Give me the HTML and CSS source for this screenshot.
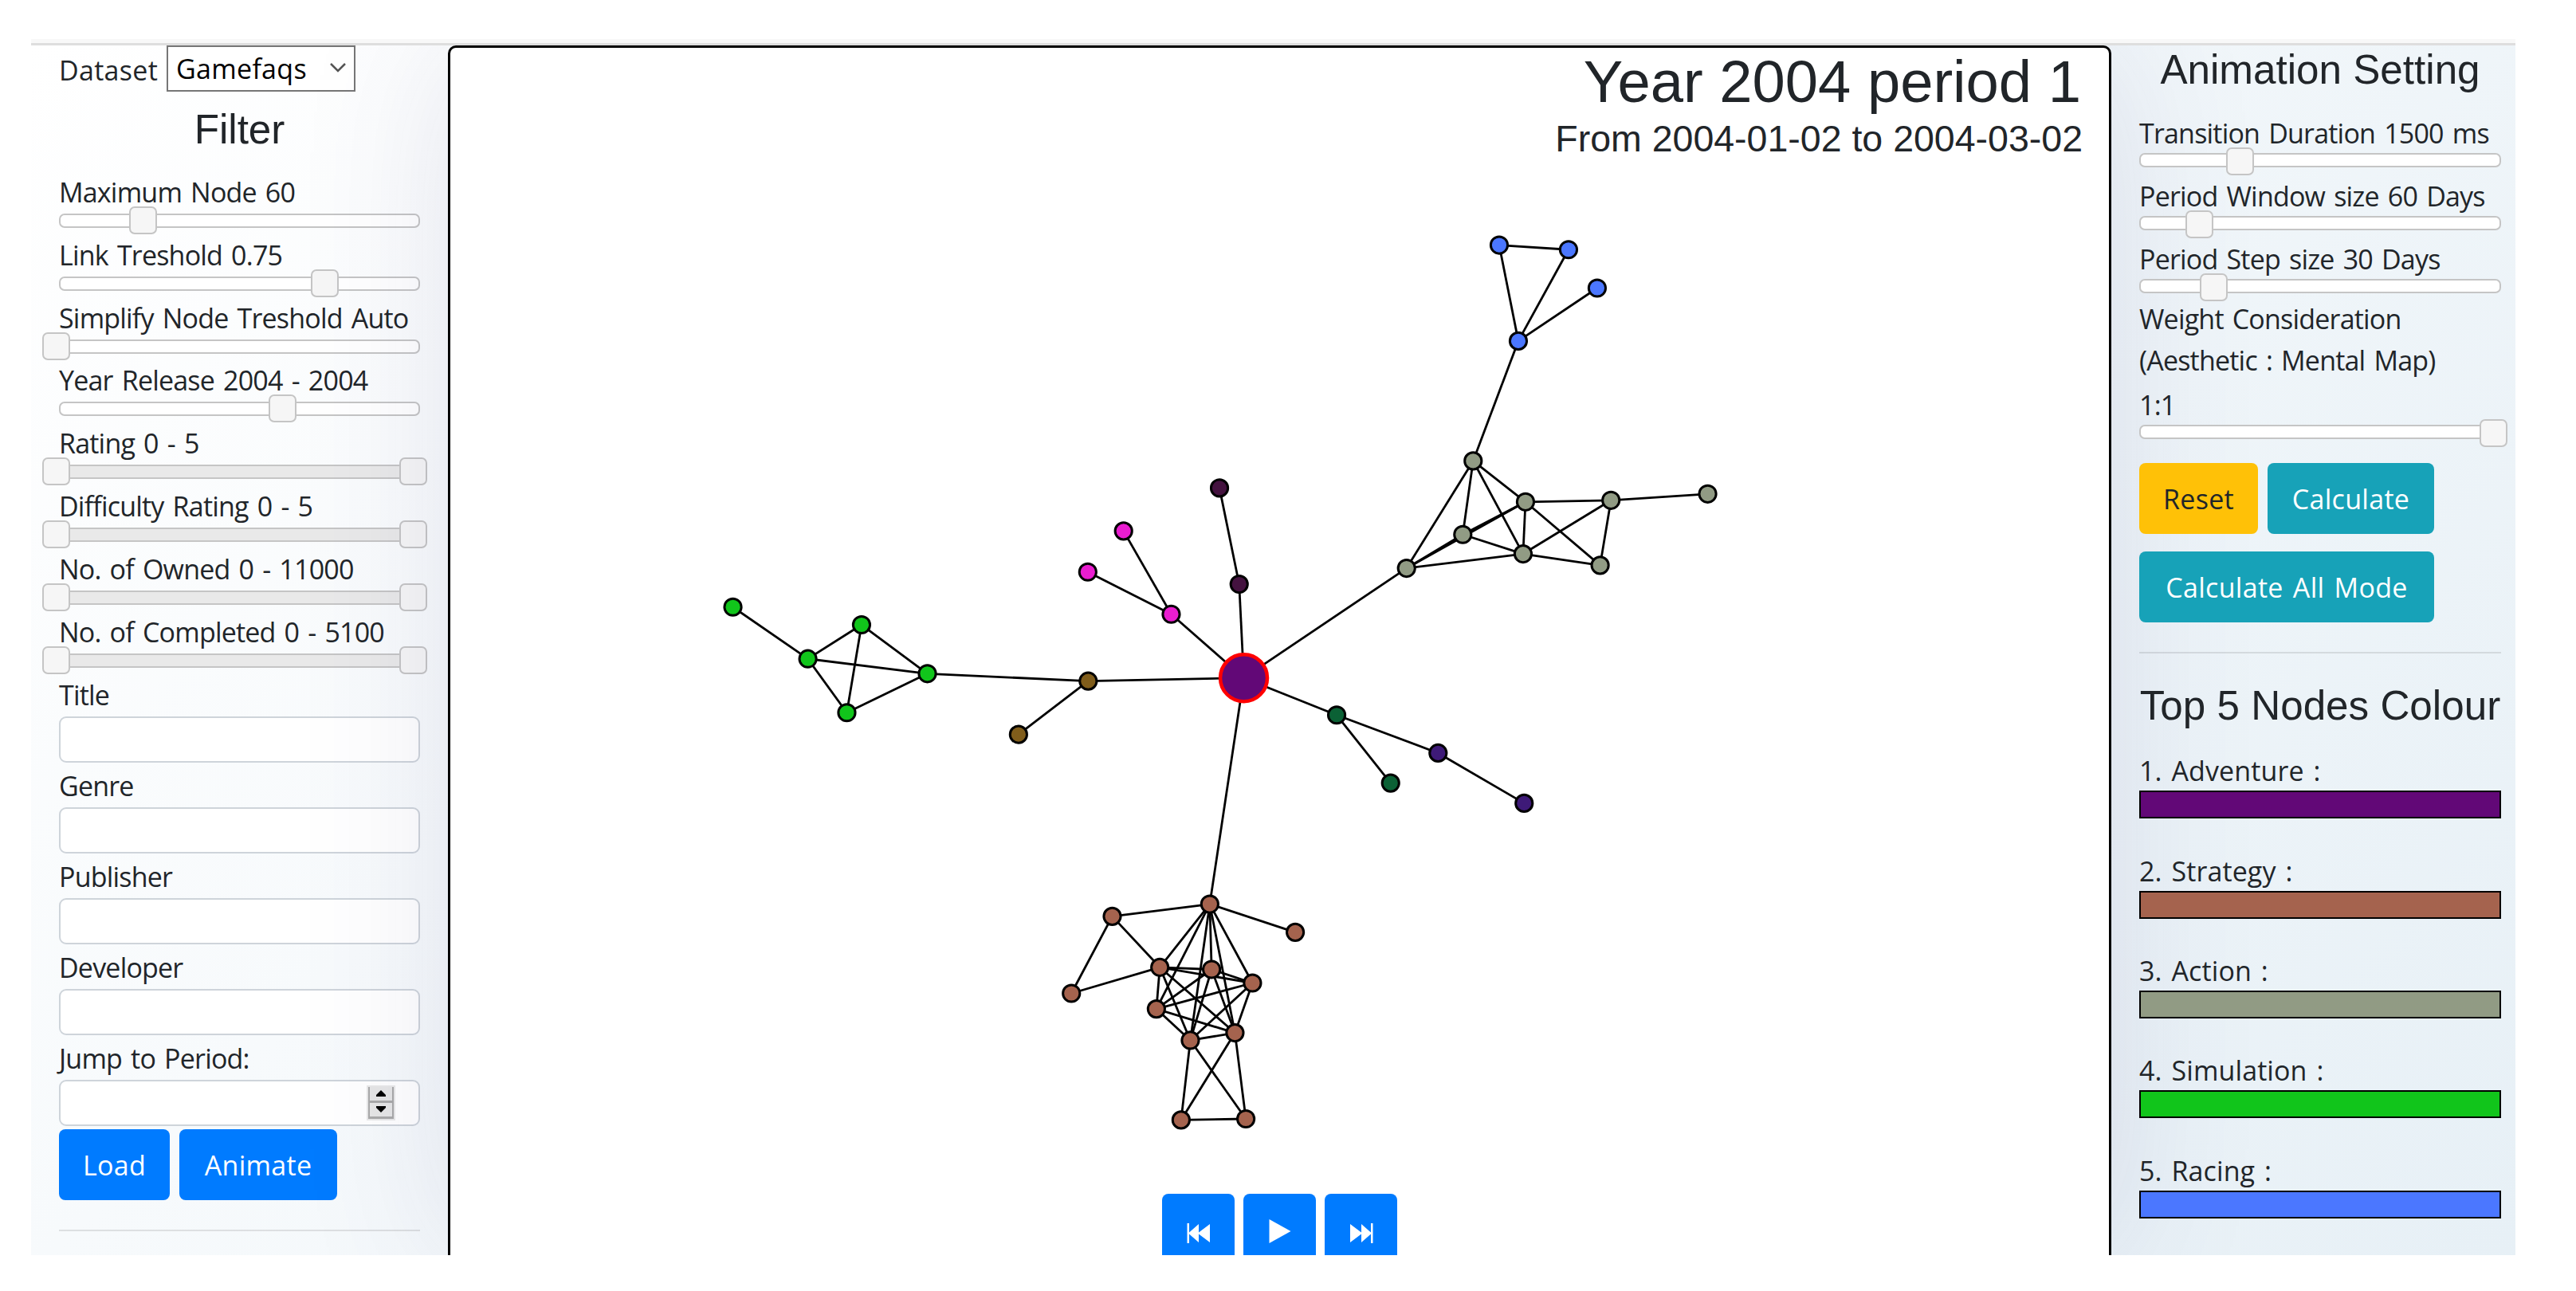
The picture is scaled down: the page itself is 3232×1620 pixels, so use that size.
FILE: index.html
```html
<!DOCTYPE html>
<html lang="en">

<head>
    <meta charset="UTF-8">
    <title>Dynamic Graph - Gamefaqs</title>
    <link rel="stylesheet" href="styles.css">
</head>

<body>
    <div class="page">
        <div class="navbar"></div>
        <div class="main">
            <div class="sidebar left">
                <div class="dataset">
                    <label>Dataset</label>
                    <div class="select">
                        <span>Gamefaqs</span>
                        <svg class="chevron" viewBox="0 0 20 12"><path d="M1 1 L10 10 L19 1" /></svg>
                    </div>
                </div>
                <h4 class="filter-title">Filter</h4>
                <div id="filters"></div>
                <div class="field"><label>Title</label><div class="text-box"></div></div>
                <div class="field"><label>Genre</label><div class="text-box"></div></div>
                <div class="field"><label>Publisher</label><div class="text-box"></div></div>
                <div class="field"><label>Developer</label><div class="text-box"></div></div>
                <div class="field">
                    <label>Jump to Period:</label>
                    <div class="text-box number">
                        <div class="spinner">
                            <span><svg viewBox="0 0 12 8"><path d="M6 0 L12 6 V8 H0 V6 Z" /></svg></span>
                            <span><svg viewBox="0 0 12 8"><path d="M0 0 H12 V2 L6 8 L0 2 Z" /></svg></span>
                        </div>
                    </div>
                </div>
                <div class="buttons">
                    <button class="btn primary load">Load</button>
                    <button class="btn primary animate">Animate</button>
                </div>
                <hr>
            </div>

            <div class="graph">
                <svg id="network" viewBox="564.4 60 2082 1515"></svg>
                <h1>Year 2004 period 1</h1>
                <h3>From 2004-01-02 to 2004-03-02</h3>
                <div class="controls">
                    <button class="btn primary">
                        <svg viewBox="0 0 30 30"><path d="M0.5 4 H3 V15.5 L15 5 V15.5 L29 5 V28 L15 17.5 V28 L3 17.5 V29 H0.5 Z" /></svg>
                    </button>
                    <button class="btn primary">
                        <svg viewBox="0 0 30 30"><path d="M1.5 -1 L28.5 14 L1.5 29 Z" /></svg>
                    </button>
                    <button class="btn primary">
                        <svg viewBox="0 0 30 30"><path d="M29.5 4 H27 V15.5 L15 5 V15.5 L1 5 V28 L15 17.5 V28 L27 17.5 V29 H29.5 Z" /></svg>
                    </button>
                </div>
            </div>

            <div class="sidebar right">
                <h4>Animation Setting</h4>
                <div id="settings"></div>
                <div class="weight">
                    <p>Weight Consideration<br>(Aesthetic : Mental Map)</p>
                    <div id="weight"></div>
                </div>
                <div class="buttons">
                    <button class="btn warning">Reset</button>
                    <button class="btn info">Calculate</button>
                    <button class="btn info all-mode">Calculate All Mode</button>
                </div>
                <hr>
                <h4>Top 5 Nodes Colour</h4>
                <div class="legend" id="legend"></div>
            </div>
        </div>
    </div>

    <script>
        // label, handle offsets from the start of the track
        const filters = [
            ['Maximum Node 60', [88]],
            ['Link Treshold 0.75', [316]],
            ['Simplify Node Treshold Auto', [-21]],
            ['Year Release 2004 - 2004', [263]],
            ['Rating 0 - 5', [-21, 427]],
            ['Difficulty Rating 0 - 5', [-21, 427]],
            ['No. of Owned 0 - 11000', [-21, 427]],
            ['No. of Completed 0 - 5100', [-21, 427]]
        ];
        const settings = [
            ['Transition Duration 1500 ms', [109]],
            ['Period Window size 60 Days', [58]],
            ['Period Step size 30 Days', [76]]
        ];
        const weight = [['1:1', [427]]];

        const genres = [
            ['Adventure', '#620877'],
            ['Strategy', '#a5634e'],
            ['Action', '#919b84'],
            ['Simulation', '#11c51b'],
            ['Racing', '#4b77ff']
        ];

        const nodes = {
            root: [1560.4, 850.7, '#620877'],
            r1: [1881, 307.3, '#4b77ff'], r2: [1968, 313, '#4b77ff'],
            r3: [2004, 361.3, '#4b77ff'], r4: [1905, 427.7, '#4b77ff'],
            a1: [1848.3, 578.3, '#919b84'], a2: [1914, 629.7, '#919b84'],
            a3: [2021.3, 627.7, '#919b84'], a4: [2142.7, 619.7, '#919b84'],
            a5: [1835.3, 670.7, '#919b84'], a6: [1911, 695, '#919b84'],
            a7: [2007.7, 709.3, '#919b84'], a8: [1764.7, 713, '#919b84'],
            s1: [1517.7, 1134.7, '#a5634e'], s2: [1395.3, 1150, '#a5634e'],
            s3: [1344, 1246.7, '#a5634e'], s4: [1625, 1170, '#a5634e'],
            s5: [1455, 1214, '#a5634e'], s6: [1520, 1216.7, '#a5634e'],
            s7: [1571.3, 1233.7, '#a5634e'], s8: [1450.7, 1266.3, '#a5634e'],
            s9: [1493.3, 1305.7, '#a5634e'], s10: [1549.3, 1296.3, '#a5634e'],
            s11: [1481.7, 1405.7, '#a5634e'], s12: [1563, 1404.3, '#a5634e'],
            g1: [919.1, 761.7, '#11c51b'], g2: [1080.6, 784, '#11c51b'],
            g3: [1013.2, 826.7, '#11c51b'], g4: [1163.2, 845.3, '#11c51b'],
            g5: [1062.1, 894.3, '#11c51b'],
            b1: [1365.1, 854.7, '#805d1b'], b2: [1277.6, 921.7, '#805d1b'],
            p1: [1409.5, 666.3, '#ea1dd0'], p2: [1364.6, 717.7, '#ea1dd0'],
            p3: [1469.3, 770.7, '#ea1dd0'],
            d1: [1529.9, 612.3, '#44123f'], d2: [1554.6, 733, '#44123f'],
            t1: [1677, 897.3, '#0b6135'], t2: [1744.7, 982.7, '#0b6135'],
            v1: [1804.3, 945, '#3e1a78'], v2: [1912.3, 1008, '#3e1a78']
        };

        const links = `
            r1-r2 r1-r4 r2-r4 r3-r4 r4-a1
            a1-a8 a1-a5 a1-a6 a1-a2 a2-a3 a3-a4 a2-a5 a2-a8 a5-a8 a5-a6
            a2-a6 a8-a6 a2-a7 a3-a6 a3-a7 a6-a7 a8-root
            root-s1 s1-s2 s1-s4 s1-s5 s1-s8 s1-s9 s1-s6 s1-s10 s1-s7
            s2-s3 s2-s5 s3-s5 s5-s6 s5-s7 s5-s8 s5-s9 s5-s10
            s6-s7 s6-s8 s6-s9 s6-s10 s7-s8 s7-s9 s7-s10 s8-s9 s8-s10
            s9-s10 s9-s11 s9-s12 s10-s11 s10-s12 s11-s12
            g1-g3 g2-g3 g2-g4 g2-g5 g3-g4 g3-g5 g4-g5 g4-b1
            b1-b2 b1-root p1-p3 p2-p3 p3-root d1-d2 d2-root
            root-t1 t1-t2 t1-v1 v1-v2`.trim().split(/\s+/);

        function drawSliders(id, rows) {
            document.getElementById(id).innerHTML = rows.map(([label, handles]) =>
                `<div class="slider-row">
                    <label>${label}</label>
                    <div class="track ${handles.length > 1 ? 'range' : ''}">
                        ${handles.map(left => `<span class="handle" style="left: ${left}px"></span>`).join('')}
                    </div>
                </div>`
            ).join('');
        }

        function drawNetwork() {
            const lines = links.map(link => {
                const [from, to] = link.split('-').map(name => nodes[name]);
                return `<line x1="${from[0]}" y1="${from[1]}" x2="${to[0]}" y2="${to[1]}" />`;
            });
            const circles = Object.keys(nodes).map(name => {
                const [x, y, colour] = nodes[name];
                return `<circle class="${name === 'root' ? 'root' : ''}" cx="${x}" cy="${y}" r="${name === 'root' ? 29.5 : 10.6}" fill="${colour}" />`;
            });
            document.getElementById('network').innerHTML = lines.join('') + circles.join('');
        }

        drawSliders('filters', filters);
        drawSliders('settings', settings);
        drawSliders('weight', weight);
        drawNetwork();
        document.getElementById('legend').innerHTML = genres.map(([name, colour], index) =>
            `<div class="legend-row"><label>${index + 1}. ${name} :</label><div class="colour" style="background-color: ${colour}"></div></div>`
        ).join('');
    </script>
</body>

</html>
```
FILE: styles.css
```css
* {
    box-sizing: border-box;
}

body {
    margin: 0;
    background-color: white;
    color: #212529;
    font-family: "Open Sans", "Noto Sans", sans-serif;
    font-size: 34px;
    line-height: 53px;
    letter-spacing: -0.8px;
    word-spacing: 3px;
}

.page {
    margin: 49px 0 0 39px;
    width: 3117px;
    height: 1526px;
    overflow: hidden;
    display: flex;
    flex-direction: column;
    background: linear-gradient(135deg, #ffffff, #e7f0f6);
}

.navbar {
    flex: none;
    height: 8px;
    background-color: #f8f8f8;
    border-bottom: 3px solid #dedede;
    position: relative;
    z-index: 1;
}

.main {
    flex: 1;
    min-height: 0;
    display: flex;
}

.sidebar {
    flex: none;
    white-space: nowrap;
}

.left {
    width: 523px;
    padding: 0 35px;
}

.right {
    width: 507px;
    padding: 0 18px 0 35px;
    position: relative;
}

h1, h3, h4 {
    margin: 0;
    font-family: "Liberation Sans", Arial, sans-serif;
    font-weight: normal;
    letter-spacing: 0;
    word-spacing: 0;
}

h4 {
    font-size: 51.2px;
    line-height: 63px;
    text-align: center;
}

label {
    display: block;
    height: 53px;
    line-height: 55px;
}

/* left sidebar */
.dataset {
    display: flex;
    height: 58px;
    letter-spacing: 0.3px;
}

.dataset label {
    width: 135px;
    line-height: 62px;
}

.select {
    width: 237px;
    height: 58px;
    padding: 0 10px;
    border: 2px solid #767676;
    background-color: white;
    color: black;
    line-height: 61px;
    display: flex;
    align-items: center;
    justify-content: space-between;
}

.chevron {
    width: 20px;
    height: 12px;
    margin-bottom: 3px;
    fill: none;
    stroke: #555;
    stroke-width: 2.5;
}

.filter-title {
    margin: 16px 0 20px;
}

#filters {
    margin-bottom: 1px;
}

.slider-row {
    height: 78.8px;
}

.track {
    position: relative;
    height: 18px;
    border: 2px solid #c5c5c5;
    border-radius: 7px;
    background-color: white;
}

.left .track {
    margin-top: 1px;
}

.range {
    background-color: #e9e9e9;
}

.handle {
    position: absolute;
    top: -11px;
    width: 35px;
    height: 35px;
    margin-left: -2px;
    border: 2px solid #c5c5c5;
    border-radius: 7px;
    background-color: #f6f6f6;
}

.field {
    height: 113.8px;
}

.text-box {
    height: 58px;
    margin-top: 1px;
    border: 2px solid #ced4da;
    border-radius: 9px;
    background-color: white;
}

.number {
    display: flex;
    justify-content: flex-end;
    padding: 5px 29px 0 0;
}

.spinner {
    width: 36px;
    height: 44px;
    border: 2px solid #e8e8e8;
}

.spinner span {
    display: flex;
    align-items: center;
    justify-content: center;
    height: 20px;
    border: solid #a9a9a9;
    border-width: 0 2px 3px;
    background-color: #e6e6e6;
}

.spinner svg {
    width: 12px;
    height: 8px;
}

.btn {
    height: 89px;
    padding: 2px 0 0;
    border: none;
    border-radius: 8px;
    font: inherit;
    letter-spacing: 0.3px;
    word-spacing: 3px;
    color: white;
}

.primary {
    background-color: #007bff;
}

.warning {
    width: 149px;
    background-color: #ffc107;
    color: #212529;
}

.info {
    width: 209px;
    background-color: #17a2b8;
}

.all-mode {
    width: 370px;
}

.buttons {
    display: flex;
    flex-wrap: wrap;
    gap: 22px 12px;
}

.left .buttons {
    margin-top: 3px;
}

.load {
    width: 139px;
}

.animate {
    width: 198px;
}

hr {
    height: 2px;
    margin: 37px 0 0;
    border: none;
    background-color: rgba(0, 0, 0, 0.1);
}

/* network */
.graph {
    position: relative;
    flex: 1;
    display: flex;
    flex-direction: column;
    text-align: right;
    border: 3px solid black;
    border-bottom: none;
    border-radius: 10px 10px 0 0;
    background-color: white;
    box-shadow: 0 0 190px rgba(60, 60, 125, 0.13);
}

#network {
    position: absolute;
    inset: 0;
    width: 100%;
    height: 100%;
}

#network line {
    stroke: black;
    stroke-width: 2.8;
}

#network circle {
    stroke: black;
    stroke-width: 3;
}

#network .root {
    stroke: red;
    stroke-width: 4.5;
}

h1 {
    margin: -3px 35px 0 0;
    font-size: 74.2px;
    line-height: 92px;
}

h3 {
    margin: -4px 33px 0 0;
    font-size: 46.5px;
    line-height: 58px;
}

.controls {
    position: relative;
    flex: none;
    display: flex;
    gap: 11px;
    height: 77px;
    margin: auto 0 0 893px;
}

.controls .btn {
    display: flex;
    justify-content: center;
    align-items: flex-start;
    width: 91px;
    padding-top: 33px;
}

.controls svg {
    width: 30px;
    height: 30px;
    overflow: visible;
    fill: white;
}

/* right sidebar */
.right h4 {
    margin-top: -1px;
}

#settings {
    margin-top: 21px;
}

.right label {
    height: 52px;
    line-height: 54px;
}

.right .handle {
    top: -9px;
}

.weight {
    margin-top: -1px;
}

.weight p {
    margin: 0 0 3px;
    line-height: 51.5px;
}

.right .buttons {
    margin-top: 21px;
}

.right hr + h4 {
    margin-top: 34px;
}

.legend {
    margin-top: 23px;
    letter-spacing: 0.1px;
}

.legend-row {
    height: 125.4px;
}

.colour {
    height: 35px;
    border: 2px solid black;
}
```
